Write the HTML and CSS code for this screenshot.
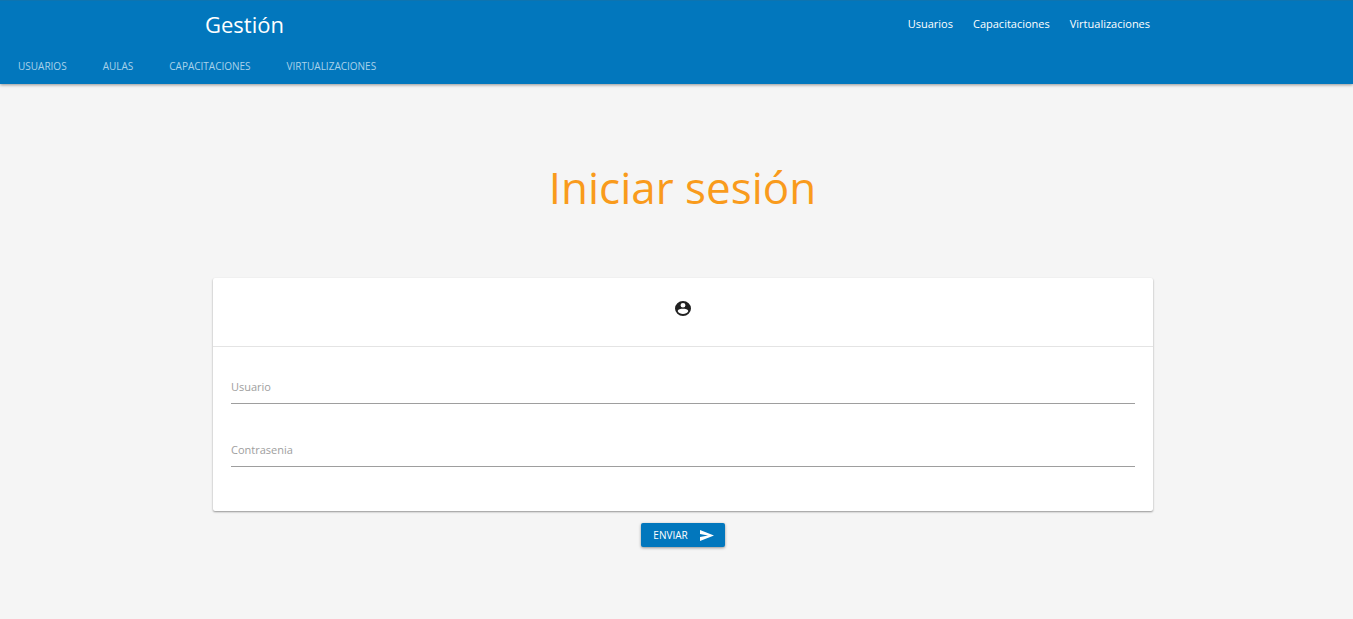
FILE: index.html
```html
<!DOCTYPE html>
<html lang="es">
<head>
<meta charset="utf-8">
<title>Gestión</title>
<link rel="stylesheet" href="styles.css">
</head>
<body>
<header class="header">
  <nav class="topbar" aria-label="Principal">
    <a class="brand" href="#">Gestión</a>
    <ul class="links">
      <li><a href="#">Usuarios</a></li>
      <li><a href="#">Capacitaciones</a></li>
      <li><a href="#">Virtualizaciones</a></li>
    </ul>
  </nav>
  <nav class="tabs" aria-label="Secciones">
    <a class="tab" href="#">USUARIOS</a>
    <a class="tab" href="#">AULAS</a>
    <a class="tab" href="#">CAPACITACIONES</a>
    <a class="tab" href="#">VIRTUALIZACIONES</a>
  </nav>
</header>
<main class="main">
  <h1 class="title">Iniciar sesión</h1>
  <form class="form">
    <div class="card">
      <div class="card-head">
        <svg class="account" viewBox="0 0 15 15" preserveAspectRatio="none" aria-hidden="true"><path fill="currentColor" fill-rule="evenodd" d="M7.500 0a7.500 7.500 0 1 0 0 15a7.500 7.500 0 0 0 0-15zM7.500 2a2.300 2.300 0 1 1 0 4.600a2.300 2.300 0 0 1 0-4.600zM2.600 10.200C2.600 8.400 5.500 7.800 7.500 7.800s4.900.600 4.900 2.400c-.800 1.700-2.700 2.700-4.900 2.700s-4.100-1-4.900-2.700z"/></svg>
      </div>
      <div class="fields">
        <div class="field">
          <label class="label" for="usuario">Usuario</label>
          <input class="input" id="usuario" type="text">
        </div>
        <div class="field">
          <label class="label" for="contrasenia">Contrasenia</label>
          <input class="input" id="contrasenia" type="password">
        </div>
      </div>
    </div>
    <button class="send" type="submit">ENVIAR
      <svg class="arrow" viewBox="2 3 21 18" preserveAspectRatio="none" aria-hidden="true"><path fill="currentColor" d="M2.010 21L23 12 2.010 3 2 9.500l12 2.500-12 2.500z"/></svg>
    </button>
  </form>
</main>
</body>
</html>
```
FILE: styles.css
```css
* {
  box-sizing: border-box;
}

body {
  margin: 0;
  background: #f5f5f5;
  color: #212121;
  font: 11px/16px "Open Sans", "Noto Sans", sans-serif;
}

a {
  color: inherit;
  text-decoration: none;
}

.header {
  background: #0277bd;
  border-top: 1px solid #0e74b0;
  color: #fff;
  box-shadow: 0 1px 3px rgba(0, 0, 0, 0.4);
}

.topbar {
  display: flex;
  justify-content: space-between;
  align-items: center;
  width: 70%;
  height: 46px;
  margin: 0 auto;
  padding-left: 2px;
}

.brand {
  font-size: 22px;
  line-height: 32px;
}

.links {
  display: flex;
  gap: 20px;
  margin: 0;
  padding: 0;
  list-style: none;
}

.tabs {
  display: flex;
  gap: 36px;
  padding: 1px 18px 0;
  color: #a9d2ea;
  font-size: 10px;
  line-height: 36px;
}

.main {
  width: 70%;
  margin: 0 auto;
  padding: 71px 0 24px;
}

.title {
  margin: 0 0 59px 12px;
  color: #f99b1c;
  font-size: 44px;
  font-weight: 400;
  line-height: 64px;
  text-align: center;
}

.form {
  display: flex;
  flex-direction: column;
  align-items: center;
  gap: 12px;
  margin: 0 -3px 0 10px;
}

.card {
  width: 100%;
  background: #fff;
  border-radius: 2px;
  box-shadow: 0 1px 2px rgba(0, 0, 0, 0.4);
}

.card-head {
  display: flex;
  justify-content: center;
  padding: 23px 0 30px;
  border-bottom: 1px solid #e4e4e4;
}

.account {
  width: 16px;
  height: 15px;
}

.fields {
  display: grid;
  gap: 20px;
  padding: 14px 18px 44px;
}

.field {
  position: relative;
}

.label {
  position: absolute;
  top: 18px;
  left: 0;
  color: #9e9e9e;
}

.input {
  display: block;
  width: 100%;
  height: 43px;
  padding: 8px 0 0;
  border: 0;
  border-bottom: 1px solid #9e9e9e;
  outline: 0;
  background: transparent;
  font: inherit;
}

.send {
  display: flex;
  align-items: center;
  gap: 12px;
  height: 24px;
  padding: 0 11px 0 12px;
  border: 0;
  border-radius: 2px;
  background: #0277bd;
  color: #fff;
  font: 10px/24px "Open Sans", "Noto Sans", sans-serif;
  box-shadow: 0 1px 3px rgba(0, 0, 0, 0.4);
}

.arrow {
  width: 14px;
  height: 11px;
}
```
